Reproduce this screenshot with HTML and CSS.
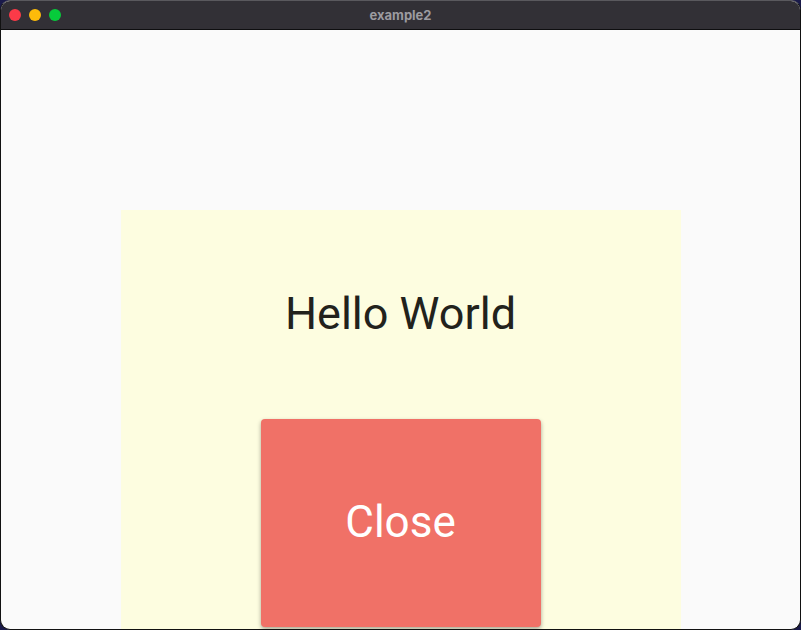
FILE: index.html
```html
<!DOCTYPE html>
<html>
<head>
<meta charset="utf-8">
<link rel="stylesheet" href="styles.css">
</head>
<body>
<div class="window">
  <div class="titlebar">
    <div class="lights">
      <span class="light red"></span>
      <span class="light yellow"></span>
      <span class="light green"></span>
    </div>
    <div class="title">example2</div>
  </div>
  <div class="content">
    <div class="panel">
      <div class="hello">Hello World</div>
      <div class="button">Close</div>
    </div>
  </div>
</div>
</body>
</html>
```
FILE: styles.css
```css
html, body {
  margin: 0;
  padding: 0;
  width: 801px;
  height: 630px;
  background: #1a1a4a;
  overflow: hidden;
}
.window {
  width: 801px;
  height: 630px;
  box-sizing: border-box;
  border-radius: 10px;
  overflow: hidden;
  border: 1px solid #111;
  border-top-color: #5a595e;
  background: #fafafa;
  display: flex;
  flex-direction: column;
}
.titlebar {
  height: 28px;
  flex: none;
  background: #323036;
  border-bottom: 1px solid #0e0e10;
  position: relative;
  display: flex;
  align-items: center;
  justify-content: center;
}
.lights {
  position: absolute;
  left: 8px;
  top: 8px;
  display: flex;
  gap: 8px;
}
.light {
  width: 12px;
  height: 12px;
  border-radius: 50%;
  display: block;
}
.red { background: #fb3a48; }
.yellow { background: #fdbb0a; }
.green { background: #07cb3b; }
.title {
  font-family: "Inter", "Liberation Sans", sans-serif;
  font-weight: 700;
  font-size: 13px;
  color: #9c9ba0;
}
.content {
  flex: 1;
  display: flex;
  justify-content: center;
  padding-top: 180px;
  overflow: hidden;
}
.panel {
  width: 560px;
  background: #fdfde0;
  display: flex;
  flex-direction: column;
  align-items: center;
  padding-top: 77px;
  box-sizing: border-box;
}
.hello {
  font-family: Roboto, sans-serif;
  font-size: 45px;
  line-height: 54px;
  color: #22221c;
}
.button {
  margin-top: 78px;
  width: 280px;
  height: 208px;
  flex: none;
  background: #f07167;
  border-radius: 4px;
  box-shadow: 0 2px 4px rgba(0,0,0,0.35);
  display: flex;
  align-items: center;
  justify-content: center;
  padding-bottom: 2px;
  box-sizing: border-box;
  font-family: Roboto, sans-serif;
  font-size: 44px;
  color: #ffffff;
}
```
